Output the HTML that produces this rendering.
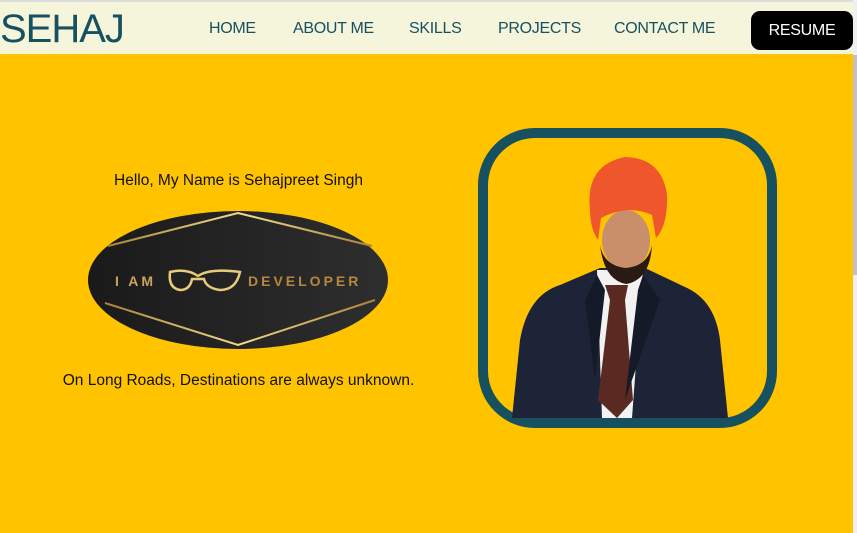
<!DOCTYPE html>
<html><head><meta charset="utf-8"><style>
*{margin:0;padding:0;box-sizing:border-box}
body{width:857px;height:533px;overflow:hidden;background:#ffc300;font-family:"Liberation Sans",sans-serif;position:relative}
.nav{position:absolute;left:0;top:0;width:853px;height:54px;background:#f5f5dc;border-top:2px solid #ddd}
.logo{position:absolute;left:0;top:5px;font-size:40px;color:#17505f;letter-spacing:-1px}
.nav a{position:absolute;top:18px;font-size:16px;color:#17505f;text-decoration:none;letter-spacing:-0.3px}
.res{position:absolute;left:751px;top:9px;width:102px;height:39px;background:#000;color:#fff;border-radius:9px;font-size:16px;text-align:center;line-height:39px;letter-spacing:-0.3px}
.sb{position:absolute;left:853px;top:0;width:4px;height:533px;background:#f0f0f0}
.sb i{position:absolute;left:0;top:55px;width:4px;height:220px;background:#c1c1c1}
.t{position:absolute;font-size:15.5px;color:#111;text-align:center}
</style></head><body>
<div class="nav">
<div class="logo">SEHAJ</div>
<a style="left:209px">HOME</a>
<a style="left:293px">ABOUT ME</a>
<a style="left:409px">SKILLS</a>
<a style="left:498px">PROJECTS</a>
<a style="left:614px">CONTACT ME</a>
<div class="res">RESUME</div>
</div>
<div class="sb"><i></i></div>
<div class="t" style="left:0;width:477px;top:172px">Hello, My Name is Sehajpreet Singh</div>
<div class="t" style="left:0;width:477px;top:372px">On Long Roads, Destinations are always unknown.</div>
<svg style="position:absolute;left:0;top:0" width="857" height="533">
<defs><linearGradient id="g" x1="0" x2="1"><stop offset="0" stop-color="#1a1a1a"/><stop offset="1" stop-color="#2e2e2e"/></linearGradient>
<linearGradient id="gold" x1="0" x2="1"><stop offset="0" stop-color="#a8843a"/><stop offset=".5" stop-color="#f0dc8a"/><stop offset="1" stop-color="#a8843a"/></linearGradient></defs>
<ellipse cx="238" cy="280" rx="150" ry="69" fill="url(#g)"/>
<polyline points="108,246 238,213 372,246" fill="none" stroke="url(#gold)" stroke-width="2"/>
<polyline points="105,303 238,345 375,300" fill="none" stroke="url(#gold)" stroke-width="2"/>
<text x="115" y="286" font-size="14" font-weight="bold" fill="#c9a55a" letter-spacing="3" font-family="Liberation Sans">I AM</text>
<text x="248" y="286" font-size="14" font-weight="bold" fill="#b8873e" letter-spacing="3" font-family="Liberation Sans">DEVELOPER</text>
<path d="M170,272 Q186,268 198,276 Q210,268 240,272 Q236,290 220,290 Q206,288 204,279 L192,279 Q190,290 180,290 Q168,288 170,272Z" fill="none" stroke="#e6cc7a" stroke-width="2.5"/>
<!-- photo -->
<rect x="483" y="133" width="289" height="290" rx="52" fill="#ffc300" stroke="#17505f" stroke-width="10"/>
<path d="M512,418 L520,340 Q528,295 560,285 L600,268 L645,268 L685,287 Q715,300 720,340 L728,418Z" fill="#1d2438"/>
<path d="M597,270 L643,270 L632,418 L602,418Z" fill="#f2f2f2"/>
<path d="M605,285 L628,285 L625,300 L633,400 L617,418 L598,400 L610,300Z" fill="#5a2a22"/>
<path d="M597,275 L585,300 L595,380 L605,290Z M643,275 L660,300 L625,400 L638,290Z" fill="#151a28"/>
<ellipse cx="626" cy="240" rx="24" ry="30" fill="#c98f6a"/>
<path d="M600,245 Q604,280 626,284 Q650,280 652,245 Q648,266 626,268 Q604,266 600,245Z" fill="#2a1a14"/>
<path d="M590,210 Q585,165 625,157 Q662,158 667,195 Q668,225 656,238 L652,215 Q628,204 601,218 L598,240 Q590,228 590,210Z" fill="#f0562c"/>
</svg>
</body></html>
